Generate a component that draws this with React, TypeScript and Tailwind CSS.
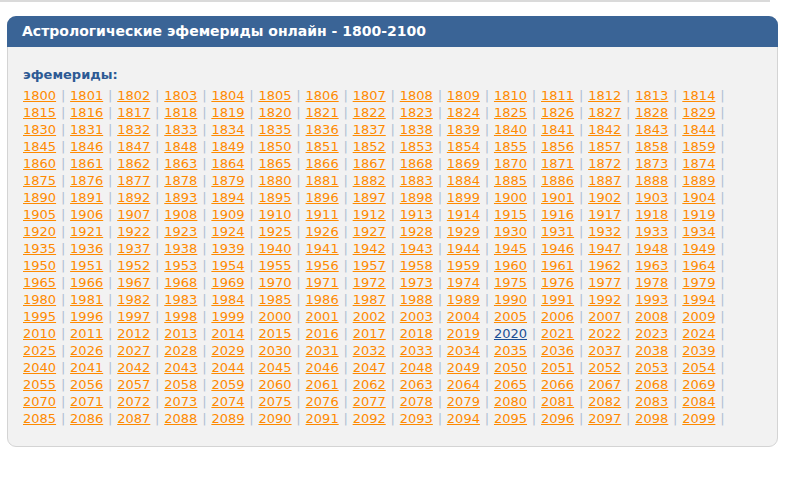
const years = Array.from({ length: 300 }, (_, i) => 1800 + i);

const rows: number[][] = [];
for (let i = 0; i < years.length; i += 15) rows.push(years.slice(i, i + 15));

export default function App() {
  return (
    <div className="min-h-[479px] bg-white font-['DejaVu_Sans',Verdana,sans-serif] text-[13px]">
      <div className="h-[2px] w-[770px] bg-[#dadada]" />
      <div className="ml-[7px] mt-[14px] w-[771px] rounded-[9px] border border-[#d4d4d4] bg-[#f2f2f2]">
        <div className="-mx-px -mt-px flex h-[31px] items-center rounded-t-[9px] bg-[#3a6496] pl-[15px]">
          <h1 className="text-[14px] font-bold text-white">
            Астрологические эфемериды онлайн - 1800-2100
          </h1>
        </div>
        <div className="px-[15px] pb-[19px] pt-[19px]">
          <p className="mb-[4px] font-bold leading-[17px] text-[#2d5a94]">эфемериды:</p>
          {rows.map((row, r) => (
            <div key={r} className="whitespace-nowrap leading-[17px]">
              {row.map((y) => (
                <span key={y}>
                  <a
                    href="#"
                    className={
                      y === 2020
                        ? "text-[#1b4f95] underline"
                        : "text-[#ff8a00] underline"
                    }
                  >
                    {y}
                  </a>
                  <span className="inline-block w-[14px] text-center text-[#b0c0d2]">|</span>
                </span>
              ))}
            </div>
          ))}
        </div>
      </div>
    </div>
  );
}
